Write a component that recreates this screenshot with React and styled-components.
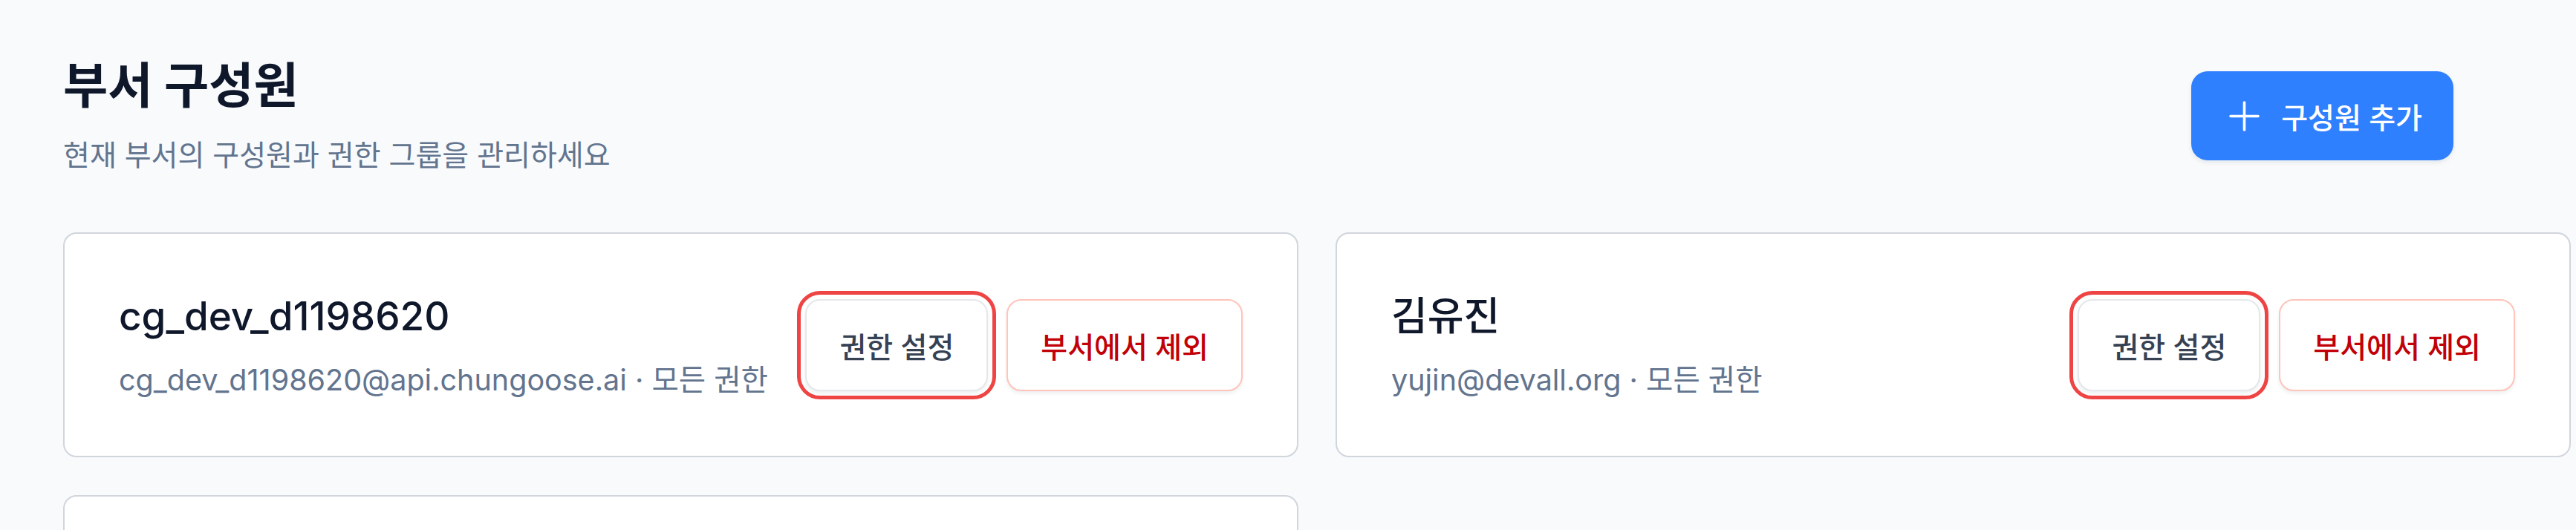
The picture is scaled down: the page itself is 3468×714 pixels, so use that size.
import React from "react";
import styled, { createGlobalStyle } from "styled-components";

const Global = createGlobalStyle`
  html, body { margin: 0; padding: 0; background: #f8fafc; }
  body {
    font-family: Inter, "Noto Sans CJK KR", "Noto Sans", sans-serif;
    color: #0f172b;
    -webkit-font-smoothing: antialiased;
  }
  * { box-sizing: border-box; }
`;

const Page = styled.main`
  padding: 74px 7px 80px 85px;
`;

const Header = styled.header`
  display: flex;
  align-items: center;
  justify-content: space-between;
  padding-right: 158px;
`;

const TitleBlock = styled.div`
  display: flex;
  flex-direction: column;
`;

const Title = styled.h1`
  margin: 0;
  font-size: 65.5px;
  line-height: 84px;
  font-weight: 700;
  color: #0f172b;
`;

const Subtitle = styled.p`
  margin: 22px 0 0;
  font-size: 39px;
  line-height: 58px;
  font-weight: 400;
  color: #62748e;
`;

const PrimaryButton = styled.button`
  display: inline-flex;
  align-items: center;
  gap: 29px;
  height: 120px;
  padding: 0 42px 0 51px;
  border: none;
  border-radius: 22px;
  background: #2f80ff;
  color: #fff;
  font-family: inherit;
  font-size: 39px;
  font-weight: 500;
  box-shadow: 0 3px 6px rgba(15, 23, 42, 0.08);
  cursor: pointer;
`;

const Grid = styled.section`
  display: grid;
  grid-template-columns: 1fr 1fr;
  gap: 51px 50px;
  margin-top: 75px;
`;

const Card = styled.article`
  display: flex;
  align-items: center;
  justify-content: space-between;
  height: 303px;
  padding: 0 73px;
  background: #fff;
  border: 2px solid #d1d5dc;
  border-radius: 18px;
`;

const Info = styled.div`
  display: flex;
  flex-direction: column;
  padding-top: 4px;
`;

const Name = styled.div`
  font-size: 53px;
  line-height: 71px;
  font-weight: 500;
  color: #0f172b;
`;

const Meta = styled.div`
  margin-top: 20px;
  font-size: 39.5px;
  line-height: 60px;
  color: #62748e;
`;

const Actions = styled.div`
  display: flex;
  align-items: center;
  gap: 25px;
`;

const ActionButton = styled.button`
  height: 124px;
  padding: 0 44px;
  border-radius: 20px;
  background: #fff;
  border: 2px solid ${(p) => (p.$danger ? "#ffc4ba" : "#e5e7eb")};
  color: ${(p) => (p.$danger ? "#c10007" : "#364153")};
  font-family: inherit;
  font-size: 39px;
  font-weight: 500;
  box-shadow: 0 3px 5px rgba(15, 23, 42, 0.07);
  cursor: pointer;
  ${(p) =>
    p.$highlight ? `outline: 5px solid #ef4444; outline-offset: 6px;` : ""}
`;

const PlusIcon = () => (
  <svg width="41" height="41" viewBox="0 0 41 41" fill="none" aria-hidden="true">
    <path d="M20.5 2v37M2 20.5h37" stroke="#fff" strokeWidth="3.6" strokeLinecap="round" />
  </svg>
);

const members = [
  { name: "cg_dev_d1198620", email: "cg_dev_d1198620@api.chungoose.ai", role: "모든 권한" },
  { name: "김유진", email: "yujin@devall.org", role: "모든 권한" },
  { name: "박지훈", email: "jihoon@devall.org", role: "읽기 권한" },
];

export default function App() {
  return (
    <>
      <Global />
      <Page>
        <Header>
          <TitleBlock>
            <Title>부서 구성원</Title>
            <Subtitle>현재 부서의 구성원과 권한 그룹을 관리하세요</Subtitle>
          </TitleBlock>
          <PrimaryButton>
            <PlusIcon />
            구성원 추가
          </PrimaryButton>
        </Header>
        <Grid>
          {members.map((m, i) => (
            <Card key={m.email}>
              <Info>
                <Name>{m.name}</Name>
                <Meta>
                  {m.email} · {m.role}
                </Meta>
              </Info>
              <Actions>
                <ActionButton $highlight={i < 2}>권한 설정</ActionButton>
                <ActionButton $danger>부서에서 제외</ActionButton>
              </Actions>
            </Card>
          ))}
        </Grid>
      </Page>
    </>
  );
}
